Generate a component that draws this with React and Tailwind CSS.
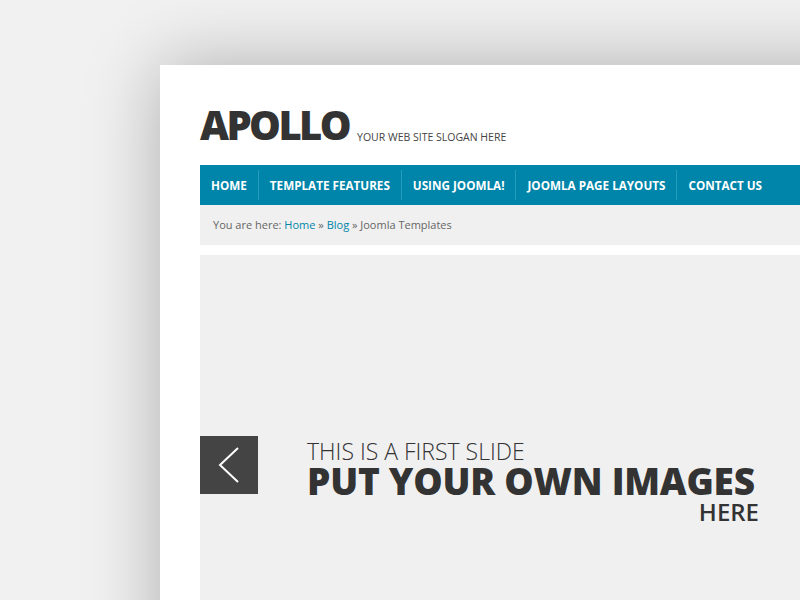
export default function App() {
  const menu = ["HOME", "TEMPLATE FEATURES", "USING JOOMLA!", "JOOMLA PAGE LAYOUTS", "CONTACT US"];

  return (
    <div
      className="h-[600px] w-[800px] overflow-hidden bg-[#f1f1f1] pt-[65px] pl-[160px]"
      style={{ fontFamily: '"Open Sans", "Liberation Sans", sans-serif' }}
    >
      <div className="w-[900px] h-[700px] bg-white pl-[40px] pt-[34px] shadow-[0_0_70px_rgba(0,0,0,0.28)]">
        {/* logo */}
        <div className="flex items-end h-[46px]">
          <h1 className="text-[40px] leading-none font-extrabold tracking-[-2.6px] text-[#333]">APOLLO</h1>
          <span className="ml-[8px] mb-[3px] text-[10.5px] text-[#444] leading-none">YOUR WEB SITE SLOGAN HERE</span>
        </div>

        {/* nav */}
        <nav className="mt-[20px] h-[40px] bg-[#0085aa] flex items-center">
          {menu.map((m, i) => (
            <div key={m} className="flex items-center h-full">
              {i > 0 && <div className="w-px h-[30px] bg-[#2a9cbb]" />}
              <a className="px-[11px] pt-[1px] text-[11.7px] font-bold text-white leading-none">{m}</a>
            </div>
          ))}
        </nav>

        {/* breadcrumb */}
        <div className="h-[40px] bg-[#f0f0f0] flex items-center pl-[13px] text-[11px] text-[#666]">
          You are here:&nbsp;<a className="text-[#0085aa]">Home</a>&nbsp;»&nbsp;<a className="text-[#0085aa]">Blog</a>&nbsp;» Joomla Templates
        </div>

        {/* slider */}
        <div className="mt-[10px] h-[400px] bg-[#f0f0f0] flex items-start pt-[181px]">
          <button className="w-[58px] h-[58px] bg-[#444]">
            <svg width="58" height="58" viewBox="0 0 58 58">
              <path d="M38 12 L20 29 L38 46" fill="none" stroke="white" strokeWidth="2" />
            </svg>
          </button>
          <div className="ml-[49px] w-[452px] flex flex-col pt-[2px] text-[#333]">
            <div className="text-[23px] font-light leading-[26px]">THIS IS A FIRST SLIDE</div>
            <div className="text-[37px] font-extrabold leading-[34px] tracking-[-0.25px] whitespace-nowrap">PUT YOUR OWN IMAGES</div>
            <div className="text-[24px] font-semibold leading-[28px] text-right">HERE</div>
          </div>
        </div>
      </div>
    </div>
  );
}
